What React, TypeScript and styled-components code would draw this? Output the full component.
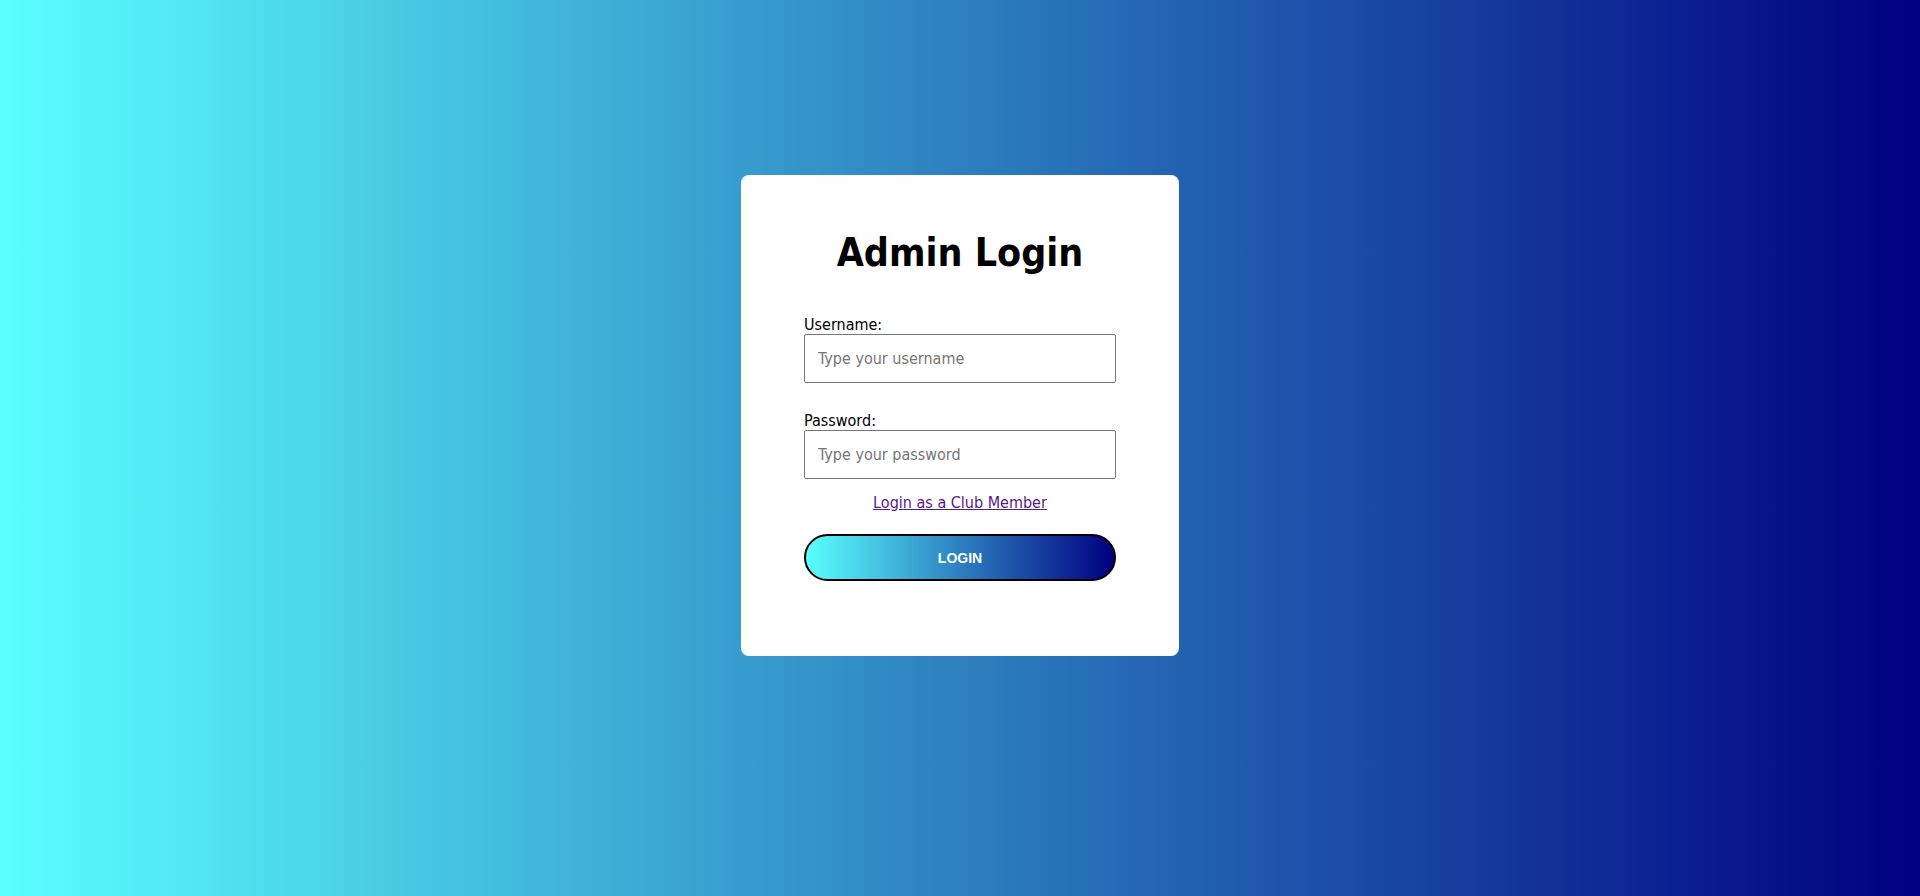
import styled, { createGlobalStyle } from 'styled-components';

const GlobalStyle = createGlobalStyle`
  html, body {
    margin: 0;
    padding: 0;
  }

  body {
    font-family: "DejaVu Sans Condensed", "DejaVu Sans", sans-serif;
    background: linear-gradient(to right, #5affff, #000080);
    min-height: 100vh;
  }
`;

const Page = styled.div`
  min-height: 100vh;
  box-sizing: border-box;
  display: flex;
  justify-content: center;
  align-items: flex-start;
  padding-top: 175px;
`;

const Card = styled.form`
  width: 438px;
  box-sizing: border-box;
  padding: 55px 63px 75px;
  background: #fff;
  border-radius: 8px;
  display: flex;
  flex-direction: column;
`;

const Title = styled.h1`
  margin: 0 0 40px;
  text-align: center;
  font-size: 39px;
  font-weight: 700;
  color: #000;
`;

const Field = styled.div`
  display: flex;
  flex-direction: column;
  margin-bottom: 28px;

  &:last-of-type {
    margin-bottom: 14px;
  }
`;

const Label = styled.label`
  font-size: 16px;
  line-height: 19px;
  color: #000;
`;

const Input = styled.input`
  height: 49px;
  box-sizing: border-box;
  padding: 0 13px;
  border: 1px solid #767676;
  border-radius: 2px;
  font-family: inherit;
  font-size: 16px;
  color: #000;

  &::placeholder {
    color: #757575;
  }
`;

const MemberLink = styled.a`
  align-self: center;
  font-size: 16px;
  line-height: 19px;
  color: #551a8b;
  margin-bottom: 22px;
`;

const Button = styled.button`
  height: 47px;
  box-sizing: border-box;
  border: 2px solid #000;
  border-radius: 24px;
  background: linear-gradient(to right, #5affff, #000080);
  color: #fff;
  font-family: "Liberation Sans", Arial, sans-serif;
  font-size: 14px;
  font-weight: 700;
  text-transform: uppercase;
  cursor: pointer;
`;

export default function App() {
  return (
    <>
      <GlobalStyle />
      <Page>
        <Card onSubmit={(e) => e.preventDefault()}>
          <Title>Admin Login</Title>
          <Field>
            <Label htmlFor="username">Username:</Label>
            <Input id="username" type="text" placeholder="Type your username" />
          </Field>
          <Field>
            <Label htmlFor="password">Password:</Label>
            <Input id="password" type="password" placeholder="Type your password" />
          </Field>
          <MemberLink href="#member">Login as a Club Member</MemberLink>
          <Button type="submit">Login</Button>
        </Card>
      </Page>
    </>
  );
}
